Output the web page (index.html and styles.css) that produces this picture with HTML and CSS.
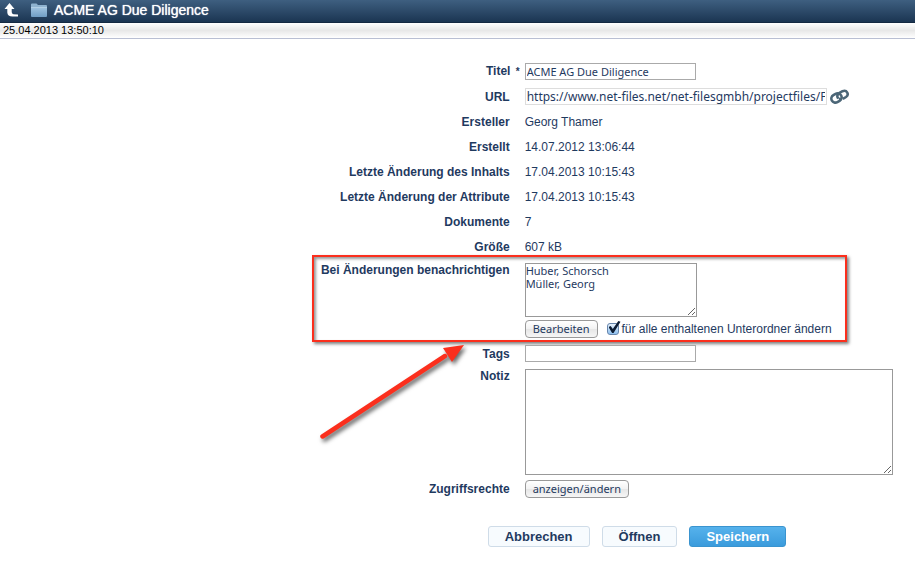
FILE: index.html
```html
<!DOCTYPE html>
<html lang="de">
<head>
  <meta charset="UTF-8">
  <meta name="viewport" content="width=device-width, initial-scale=1.0">
  <title>ACME AG Due Diligence</title>
  <link rel="stylesheet" href="styles.css">
</head>
<body>

<!-- Header -->
<header class="header">
  <a href="#" class="up" aria-label="Nach oben">
    <svg width="16" height="16" viewBox="0 0 16 16">
      <path d="M5.500 1L10.500 7H7.700V10Q7.700 12 9.500 12.200L14 12.500V14.500H8.500Q3.500 14.500 3.300 10.500V7H0.500Z" fill="#fff"/>
    </svg>
  </a>
  <svg class="folder" width="18" height="16" viewBox="0 0 18 16">
    <defs>
      <linearGradient id="folderFill" x1="0" y1="0" x2="0" y2="1">
        <stop offset="0" stop-color="#a3c6e2"/>
        <stop offset="1" stop-color="#6f9dc4"/>
      </linearGradient>
    </defs>
    <path d="M1 2.500Q1 1.500 2 1.500H6.500L8 3H16Q17 3 17 4V6H1Z" fill="#8fb3d0"/>
    <path d="M1 5H17V14Q17 15 16 15H2Q1 15 1 14Z" fill="url(#folderFill)"/>
    <path d="M1 5.500H17" stroke="#b3d0e6"/>
  </svg>
  <h1>ACME AG Due Diligence</h1>
</header>
<div class="timestamp">25.04.2013 13:50:10</div>

<form class="form">
  <div class="row">
    <label for="titel">Titel <span class="required">*</span></label>
    <div class="field"><input type="text" id="titel" class="text" value="ACME AG Due Diligence"></div>
  </div>
  <div class="row">
    <label for="url">URL</label>
    <div class="field">
      <input type="text" id="url" class="text url" value="https://www.net-files.net/net-filesgmbh/projectfiles/FileDownload" readonly>
      <a href="#" class="link" aria-label="Link">
        <svg width="20" height="16" viewBox="0 0 20 16" fill="none">
          <g stroke="#4b6677" stroke-width="2.600">
            <rect x="1.200" y="5" width="10.600" height="8" rx="4" transform="rotate(-30 6.500 9)"/>
            <path d="M8.200 9.500C6.500 7.500 7.500 5 9.500 3.900L12.500 2.200C17 0.500 19.500 5.500 16 8L12.800 9.900"/>
          </g>
          <path d="M8.800 10.300L10.800 9.200" stroke="#4b6677" stroke-width="2.400"/>
        </svg>
      </a>
    </div>
  </div>
  <div class="row">
    <span class="label">Ersteller</span>
    <div class="field">Georg Thamer</div>
  </div>
  <div class="row">
    <span class="label">Erstellt</span>
    <div class="field">14.07.2012 13:06:44</div>
  </div>
  <div class="row">
    <span class="label">Letzte Änderung des Inhalts</span>
    <div class="field">17.04.2013 10:15:43</div>
  </div>
  <div class="row">
    <span class="label">Letzte Änderung der Attribute</span>
    <div class="field">17.04.2013 10:15:43</div>
  </div>
  <div class="row">
    <span class="label">Dokumente</span>
    <div class="field">7</div>
  </div>
  <div class="row">
    <span class="label">Größe</span>
    <div class="field">607 kB</div>
  </div>

  <!-- Notifications, marked with frame and arrow -->
  <div class="row top marked">
    <label for="notify">Bei Änderungen benachrichtigen</label>
    <div class="notify">
      <textarea id="notify" class="users" readonly>Huber, Schorsch
Müller, Georg</textarea>
      <div class="field">
        <button type="button" class="small-btn">Bearbeiten</button>
        <input type="checkbox" id="subfolders" class="check" checked>
        <label for="subfolders" class="check-label">für alle enthaltenen Unterordner ändern</label>
      </div>
    </div>
    <div class="marker">
      <svg class="arrow" width="160" height="104" viewBox="0 0 160 104">
        <path d="M7.500 95.500L130 15" stroke="#fb2f1d" stroke-width="4.500" stroke-linecap="round"/>
        <path d="M149 4L128 7L137 21Z" fill="#fb2f1d"/>
      </svg>
    </div>
  </div>

  <div class="row">
    <label for="tags">Tags</label>
    <div class="field"><input type="text" id="tags" class="text"></div>
  </div>
  <div class="row top">
    <label for="notiz">Notiz</label>
    <textarea id="notiz" class="note"></textarea>
  </div>
  <div class="row rights">
    <span class="label">Zugriffsrechte</span>
    <div class="field"><button type="button" class="small-btn">anzeigen/ändern</button></div>
  </div>

  <div class="actions">
    <button type="button" class="btn">Abbrechen</button>
    <button type="button" class="btn">Öffnen</button>
    <button type="submit" class="btn primary">Speichern</button>
  </div>
</form>

</body>
</html>
```
FILE: styles.css
```css
* {
  margin: 0;
  padding: 0;
  box-sizing: border-box;
}

body {
  --label-width: 55.7%;
  font-family: "Liberation Sans", Arial, sans-serif;
  font-size: 12px;
  line-height: 14px;
  background: #fff;
  color: #1f3a5f;
}

/* Header */
.header {
  display: flex;
  align-items: center;
  height: 23px;
  padding: 0 4px 2px;
  background: linear-gradient(#3e5f80, #1b3552);
  border-bottom: 1px solid #142a42;
  color: #fff;
}

.header h1 {
  margin-left: 6px;
  font-size: 14px;
  font-weight: normal;
  line-height: 18px;
  text-shadow: 0 0 1px #fff;
}

.up, .folder, .link {
  display: block;
  flex: none;
}

.up, .link {
  height: 16px;
}

.folder {
  margin-left: 10px;
}

.timestamp {
  height: 16px;
  padding-left: 3px;
  font-size: 11px;
  line-height: 15px;
  color: #000;
  background: linear-gradient(#fff, #e8e8e8 50%, #fff);
  border-bottom: 1px solid #b9bfd3;
}

/* Form rows */
.form {
  padding-top: 20px;
}

.row {
  display: grid;
  grid-template-columns: var(--label-width) 1fr;
  column-gap: 15px;
  align-items: center;
  min-height: 25px;
  position: relative;
}

.row.top {
  align-items: start;
  padding-top: 3px;
}

.row.marked {
  padding: 4px 0 3px;
}

.row > label, .label {
  text-align: right;
  font-weight: bold;
}

.row > label:has(.required) {
  margin-right: -10px;
}

.required {
  margin-left: 2px;
  font-size: 10px;
}

.field {
  display: flex;
  align-items: center;
}

input, textarea, .small-btn {
  font-family: "Noto Sans", sans-serif;
  font-size: 11px;
  color: #1f3a5f;
}

.text {
  width: 171px;
  height: 17px;
  padding: 0 1px;
  border: 1px solid #aaa;
  background: #fff;
}

.text.url {
  width: 302px;
  font-size: 12px;
  border-color: #ddd;
}

.link {
  margin-left: 3px;
}

textarea {
  display: block;
  padding: 0;
  line-height: 13px;
  border: 1px solid #999;
}

/* Notifications */
.notify {
  display: grid;
  row-gap: 3px;
}

.users {
  width: 172px;
  height: 54px;
}

.check {
  appearance: none;
  position: relative;
  width: 12px;
  height: 12px;
  margin-left: 9px;
  border: 1px solid #6786ad;
  border-radius: 3px;
  background: linear-gradient(#e6f1fc, #8fc0ee);
}

.check:checked::after {
  content: "";
  position: absolute;
  left: 1px;
  top: -3px;
  width: 12px;
  height: 12px;
  background: #0c1c33;
  clip-path: polygon(0 50%, 18% 42%, 36% 66%, 82% 0, 100% 6%, 42% 100%, 30% 100%);
}

.check-label {
  margin-left: 3px;
}

.marker {
  position: absolute;
  left: calc(var(--label-width) - 198px);
  top: -4px;
  width: 535px;
  height: 87px;
  border: 2px solid #fb2f1d;
  box-shadow: 2px 2px 3px rgba(0, 0, 0, 0.5), inset 2px 2px 3px rgba(0, 0, 0, 0.4);
  pointer-events: none;
}

.arrow {
  position: absolute;
  left: 1px;
  top: 84px;
  filter: drop-shadow(2px 3px 2px rgba(0, 0, 0, 0.6));
}

.note {
  width: 368px;
  max-width: 100%;
  height: 106px;
}

.rights {
  padding-top: 3px;
}

/* Buttons */
.small-btn {
  height: 18px;
  padding: 0 7px;
  line-height: 16px;
  border: 1px solid #999;
  border-radius: 4px;
  background: linear-gradient(#fff, #f2f2f2 50%, #e6e6e6 50%, #f6f6f6);
}

.actions {
  display: flex;
  gap: 12px;
  margin: 26px 0 18px;
  padding-left: calc(var(--label-width) - 22px);
}

.btn {
  height: 21px;
  padding: 0 16px;
  font-family: inherit;
  font-size: 13px;
  font-weight: bold;
  line-height: 19px;
  color: #1f3a5f;
  background: #f7fbfe;
  border: 1px solid #cfdce8;
  border-radius: 3px;
}

.btn.primary {
  color: #fff;
  background: linear-gradient(#56b2ec, #3a9bdc);
  border-color: #3a94cf;
}
```
